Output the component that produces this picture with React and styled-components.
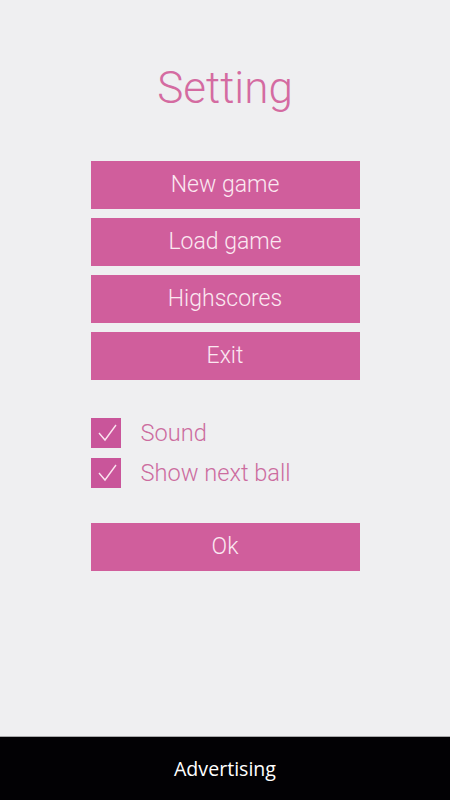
import styled, { createGlobalStyle } from "styled-components";

const GlobalStyle = createGlobalStyle`
  html, body {
    margin: 0;
    padding: 0;
    background: #efeff1;
  }
`;

const Page = styled.div`
  display: flex;
  flex-direction: column;
  height: 800px;
  font-family: Roboto, "Liberation Sans", sans-serif;
`;

const Main = styled.main`
  flex: 1;
  display: flex;
  flex-direction: column;
  align-items: center;
  background: #efeff1;
  border-bottom: 1px solid #a9a9ab;
`;

const Title = styled.h1`
  margin: 62px 0 0;
  font-size: 44px;
  line-height: 52px;
  font-weight: 300;
  color: #d46ba1;
`;

const Menu = styled.div`
  display: flex;
  flex-direction: column;
  gap: 9px;
  width: 269px;
  margin-top: 47px;
`;

const Button = styled.button`
  display: block;
  width: 269px;
  height: 48px;
  padding: 0;
  border: none;
  background: #d05e9c;
  color: #fbe8f1;
  font-family: Roboto, "Liberation Sans", sans-serif;
  font-size: 23px;
  font-weight: 300;
  line-height: 48px;
  text-align: center;
  cursor: pointer;
  margin-top: ${(p) => p.$top || 0}px;
`;

const Options = styled.div`
  display: flex;
  flex-direction: column;
  gap: 10px;
  width: 269px;
  margin-top: 38px;
`;

const OptionRow = styled.label`
  display: flex;
  align-items: center;
  gap: 20px;
  height: 30px;
  color: #cc6c9f;
  font-size: 23.6px;
  font-weight: 300;
  cursor: pointer;
`;

const Box = styled.span`
  display: flex;
  width: 30px;
  height: 30px;
  background: #c9559a;
  flex-shrink: 0;
`;

const AdBar = styled.footer`
  height: 63px;
  background: #020104;
  display: flex;
  align-items: center;
  justify-content: center;
  color: #ffffff;
  font-family: "Open Sans", "Liberation Sans", sans-serif;
  font-size: 19.6px;
`;

const Check = () => (
  <svg width="30" height="30" viewBox="0 0 30 30">
    <polyline
      points="8,15 14,22 25,7"
      fill="none"
      stroke="#fbe3ef"
      strokeWidth="1.4"
    />
  </svg>
);

const Option = ({ label }) => (
  <OptionRow>
    <Box>
      <Check />
    </Box>
    {label}
  </OptionRow>
);

export default function App() {
  return (
    <>
      <GlobalStyle />
      <Page>
        <Main>
          <Title>Setting</Title>
          <Menu>
            <Button>New game</Button>
            <Button>Load game</Button>
            <Button>Highscores</Button>
            <Button>Exit</Button>
          </Menu>
          <Options>
            <Option label="Sound" />
            <Option label="Show next ball" />
          </Options>
          <Button $top={35}>Ok</Button>
        </Main>
        <AdBar>Advertising</AdBar>
      </Page>
    </>
  );
}
